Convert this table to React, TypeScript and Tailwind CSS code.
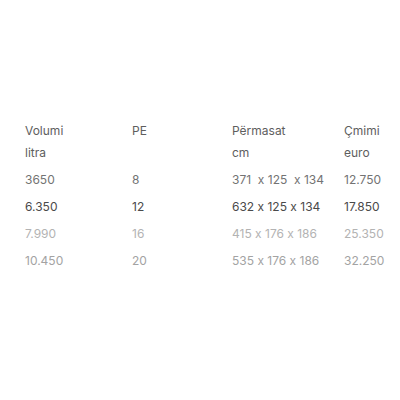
const rows = [
  { v: '3650', pe: '8', dim: '371  x 125  x 134', price: '12.750', color: 'text-[#737373]' },
  { v: '6.350', pe: '12', dim: '632 x 125 x 134', price: '17.850', color: 'text-[#4a4a4a]' },
  { v: '7.990', pe: '16', dim: '415 x 176 x 186', price: '25.350', color: 'text-[#b3b3b3]' },
  { v: '10.450', pe: '20', dim: '535 x 176 x 186', price: '32.250', color: 'text-[#a3a3a3]' },
];

export default function App() {
  return (
    <div className="w-[400px] h-[400px] bg-white font-['Inter',sans-serif] text-[12px] [font-feature-settings:'calt'_0] pt-[120px] pl-[25px]">
      {/* Header */}
      <div className="grid grid-cols-[107px_100px_112px_auto] text-[#5e5e5e] leading-[22px]">
        <div>
          <div>Volumi</div>
          <div>litra</div>
        </div>
        <div>PE</div>
        <div>
          <div>Përmasat</div>
          <div>cm</div>
        </div>
        <div>
          <div>Çmimi</div>
          <div>euro</div>
        </div>
      </div>
      {/* Rows */}
      <div className="mt-[2px]">
        {rows.map((r) => (
          <div
            key={r.v}
            className={`grid grid-cols-[107px_100px_112px_auto] leading-[27px] ${r.color}`}
          >
            <div>{r.v}</div>
            <div>{r.pe}</div>
            <div className="whitespace-pre">{r.dim}</div>
            <div>{r.price}</div>
          </div>
        ))}
      </div>
    </div>
  );
}
